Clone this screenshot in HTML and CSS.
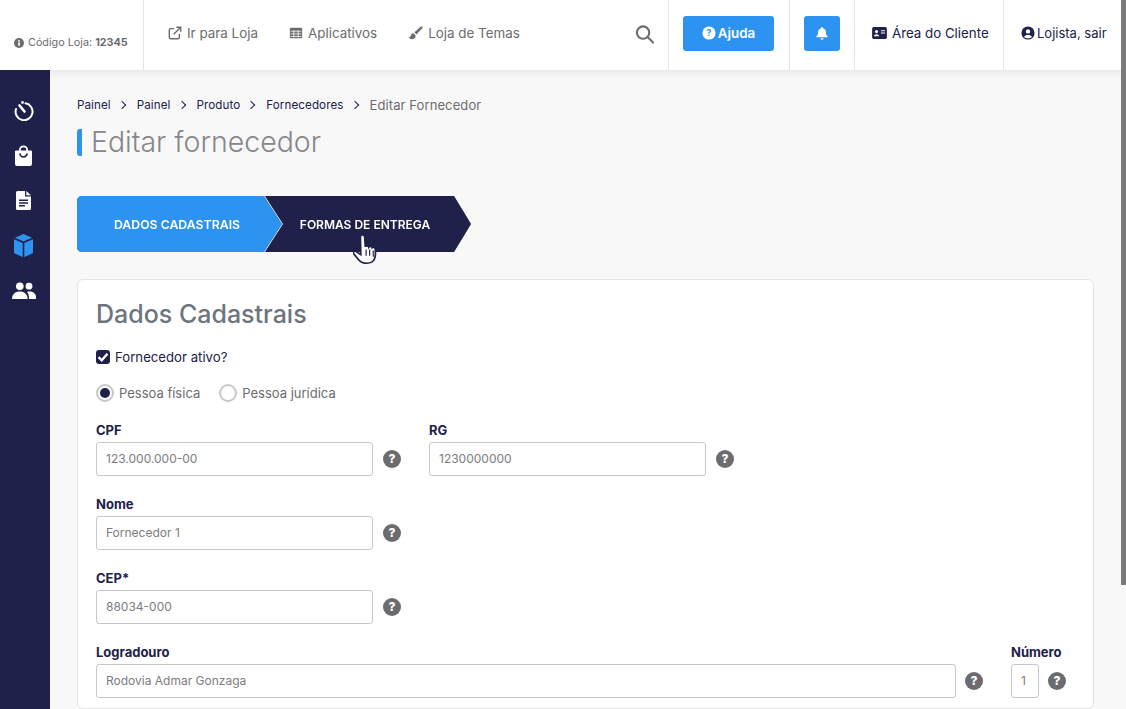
FILE: index.html
```html
<!DOCTYPE html>
<html lang="en">

<head>
    <meta charset="UTF-8">
    <meta name="viewport" content="width=device-width, initial-scale=1.0">
    <title>Editar fornecedor</title>
    <link rel="stylesheet" href="styles.css">
</head>

<body>
    <header class="topbar">
        <div class="store-code">
            <svg class="ico-info" viewBox="0 0 16 16"><circle cx="8" cy="8" r="8" fill="#6c6c70"/><rect x="6.800" y="7" width="2.600" height="5.400" fill="#fff"/><circle cx="8" cy="4.600" r="1.500" fill="#fff"/></svg>
            <span>Código Loja: <b>12345</b></span>
        </div>
        <nav class="topnav">
            <a href="#">
                <svg class="ico" viewBox="0 0 16 16" fill="none" stroke="#6c6c70" stroke-width="1.600"><path d="M7 3H3a1.500 1.500 0 0 0-1.500 1.500V13A1.500 1.500 0 0 0 3 14.500h8.500A1.500 1.500 0 0 0 13 13V9"/><path d="M6.500 9.500 14 2M9.500 1.500h5v5"/></svg>
                Ir para Loja
            </a>
            <a href="#">
                <svg class="ico" viewBox="0 0 16 16"><rect x="1" y="2" width="14" height="12" rx="1.500" fill="#6c6c70"/><path d="M2 6h12M2 9h12M2 12h12M5.500 5v8M10.500 5v8" stroke="#fff" stroke-width=".9"/></svg>
                Aplicativos
            </a>
            <a href="#">
                <svg class="ico ico-brush" viewBox="0 0 16 16" fill="#6c6c70"><path d="M15.500.8c-.6-.6-1.300-.4-2 .1L6.800 6.700 9 9l6-6.300c.6-.7.900-1.400.5-1.900zM5.800 7.700c-1.800.2-2.600 1.300-2.900 2.700-.2 1-.9 1.600-2.400 1.700 1 1.500 3 2.300 5 1.700 1.900-.6 3-2.300 2.500-4z"/></svg>
                Loja de Temas
            </a>
        </nav>
        <div class="search-cell">
            <svg class="ico-search" viewBox="0 0 20 20" fill="none" stroke="#6c6c70" stroke-width="2.200"><circle cx="8.500" cy="8.500" r="6.500"/><path d="m13.500 13.500 5.500 5.500" stroke-linecap="round"/></svg>
        </div>
        <div class="top-cell help-cell">
            <button class="btn-blue btn-help">
                <svg class="ico" viewBox="0 0 16 16"><circle cx="8" cy="8" r="7.500" fill="#fff"/><text x="8" y="11.500" text-anchor="middle" class="help-mark" fill="#2d93f0">?</text></svg>
                Ajuda
            </button>
        </div>
        <div class="top-cell bell-cell">
            <button class="btn-blue btn-bell">
                <svg class="ico" viewBox="0 0 16 16" fill="#fff"><path d="M8 1c-.6 0-1 .4-1 1v.5C4.800 3 3.500 4.700 3.500 7c0 2.500-.7 3.600-2 4.800-.3.400 0 1 .5 1h12c.5 0 .8-.6.5-1-1.300-1.200-2-2.300-2-4.800 0-2.300-1.300-4-3.500-4.500V2c0-.6-.4-1-1-1zM6.200 14a1.800 1.800 0 0 0 3.600 0z"/></svg>
            </button>
        </div>
        <a class="top-cell client-cell" href="#">
            <svg class="ico-card" viewBox="0 0 16 13"><rect width="16" height="13" rx="1.800" fill="#20214a"/><circle cx="4.800" cy="5" r="1.700" fill="#fff"/><path d="M2 10c0-3 5.600-3 5.600 0z" fill="#fff"/><path d="M9.500 4h4.500M9.500 6.500h4.500" stroke="#fff" stroke-width="1.200"/></svg>
            Área do Cliente
        </a>
        <a class="top-cell user-cell" href="#">
            <svg class="ico" viewBox="0 0 16 16"><circle cx="8" cy="8" r="7.500" fill="#20214a"/><circle cx="8" cy="6.200" r="2.500" fill="#fff"/><path d="M3.500 12.500c1-3 8-3 9 0-2 2-7 2-9 0z" fill="#fff"/></svg>
            Lojista, sair
        </a>
    </header>

    <div class="layout">
        <aside class="sidebar">
            <div class="side-item">
                <svg class="ico-timer" viewBox="0 0 20 20" fill="none" stroke="#fff" stroke-width="2"><path d="M11.500 2.300A8.500 8.500 0 1 1 2 8" stroke-linecap="round"/><path d="M5.500 4.500l5 6" stroke-width="2.600" stroke-linecap="round"/><circle cx="8.500" cy="1.500" r="1.400" fill="#fff" stroke="none"/></svg>
            </div>
            <div class="side-item">
                <svg class="ico-bag" viewBox="0 0 17 21"><path d="M1 5.500h15a1 1 0 0 1 1 1v12.500a2 2 0 0 1-2 2H2a2 2 0 0 1-2-2V6.500a1 1 0 0 1 1-1z" fill="#fff"/><path d="M4.800 6V5a3.700 3.700 0 0 1 7.400 0v1" fill="none" stroke="#fff" stroke-width="1.800"/><path d="M5 8.500a3.500 3.500 0 0 0 7 0" fill="none" stroke="#20214a" stroke-width="1.700"/></svg>
            </div>
            <div class="side-item">
                <svg class="ico-doc" viewBox="0 0 15 19"><path d="M1.500 0H9v5.500h6v12A1.500 1.500 0 0 1 13.500 19h-12A1.500 1.500 0 0 1 0 17.500v-16A1.500 1.500 0 0 1 1.500 0zM10.300 0 15 4.300h-4.700z" fill="#fff"/><path d="M3 9.300h9M3 12h9M3 14.700h6" stroke="#20214a" stroke-width="1.400"/></svg>
            </div>
            <div class="side-item">
                <svg class="ico-cube" viewBox="0 0 19 23"><path d="M9.500 0 18 3.800 9.500 7.500 1 3.800z" fill="#2d93f0"/><path d="M0 5.300l8.700 3.800V23L.8 19.500a1.300 1.300 0 0 1-.8-1.200zM19 5.300l-8.700 3.800V23l7.900-3.500a1.300 1.300 0 0 0 .8-1.200z" fill="#2d93f0"/></svg>
            </div>
            <div class="side-item">
                <svg class="ico-users" viewBox="0 0 24 17" fill="#fff"><circle cx="7.800" cy="4.200" r="3.800"/><circle cx="17" cy="4.200" r="3.400"/><path d="M0 17c0-5 3.500-7.500 7.800-7.500s7.800 2.500 7.800 7.500z"/><path d="M17 17h7v-2c0-3.500-3-5.500-6.500-5.500-1 0-1.800.1-2.500.4 1.500 1.700 2 3.500 2 7.100z"/></svg>
            </div>
        </aside>

        <main class="content">
            <ol class="breadcrumb">
                <li>Painel</li>
                <li>Painel</li>
                <li>Produto</li>
                <li>Fornecedores</li>
                <li class="current">Editar Fornecedor</li>
            </ol>
            <h1 class="page-title">Editar fornecedor</h1>

            <div class="steps">
                <div class="step-track">
                    <a class="step step-first" href="#">DADOS CADASTRAIS</a>
                    <a class="step step-second" href="#">FORMAS DE ENTREGA</a>
                </div>
                <svg class="cursor" viewBox="1 1 21 31" preserveAspectRatio="none"><path d="M9 2c1.200 0 1.700 1 1.800 2l.6 9.500c.3-1.300 2.600-1.300 2.900.3.500-1 2.500-1 2.800.6.700-.8 2.500-.5 2.600 1 .3 4 .4 6.300-.4 9-.9 3-3.400 5-6.800 5-3 0-5-1.300-6.800-3.500L1.500 20c-1-1.500.8-3 2.200-2l3.800 3L7.200 4c0-1.100.7-2 1.800-2z" fill="#fff" stroke="#20214a" stroke-width="1.500"/><path d="M12 16v6M15 16v6M18 17v6" stroke="#20214a" stroke-width="1"/></svg>
            </div>

            <section class="card">
                <h2>Dados Cadastrais</h2>

                <label class="check-row">
                    <span class="fake-check"><svg viewBox="0 0 14 14" fill="none" stroke="#fff" stroke-width="2.400"><path d="M2.500 7.200 5.700 10.300 11.500 3.800"/></svg></span>
                    Fornecedor ativo?
                </label>

                <div class="radio-row">
                    <label class="radio radio-on"><span class="dot"></span>Pessoa física</label>
                    <label class="radio"><span class="dot"></span>Pessoa jurídica</label>
                </div>

                <div class="form-row">
                    <div class="field">
                        <label>CPF</label>
                        <div class="input-line"><div class="input w277">123.000.000-00</div><span class="tip">?</span></div>
                    </div>
                    <div class="field">
                        <label>RG</label>
                        <div class="input-line"><div class="input w277">1230000000</div><span class="tip">?</span></div>
                    </div>
                </div>

                <div class="form-row">
                    <div class="field">
                        <label>Nome</label>
                        <div class="input-line"><div class="input w277">Fornecedor 1</div><span class="tip">?</span></div>
                    </div>
                </div>

                <div class="form-row">
                    <div class="field">
                        <label>CEP*</label>
                        <div class="input-line"><div class="input w277">88034-000</div><span class="tip">?</span></div>
                    </div>
                </div>

                <div class="form-row form-row-wide">
                    <div class="field">
                        <label>Logradouro</label>
                        <div class="input-line"><div class="input w860">Rodovia Admar Gonzaga</div><span class="tip">?</span></div>
                    </div>
                    <div class="field">
                        <label>Número</label>
                        <div class="input-line"><div class="input w28">1</div><span class="tip">?</span></div>
                    </div>
                </div>
            </section>
        </main>
    </div>
    <div class="scrollbar"></div>
</body>

</html>
```

FILE: styles.css
```css
body {
    margin: 0;
    height: 709px;
    overflow: hidden;
    background: #f8f8f8;
    color: #20214a;
    font-family: Inter, "Open Sans", Arial, sans-serif;
    font-size: 13px;
}

a {
    color: inherit;
    text-decoration: none;
}

/* top bar */
.topbar {
    display: flex;
    height: 70px;
    background: #fff;
    box-shadow: 0 2px 10px rgba(0, 0, 0, 0.08);
    position: relative;
    z-index: 2;
}

.store-code {
    width: 144px;
    box-sizing: border-box;
    border-right: 1px solid #e4e4e4;
    padding: 35px 0 0 14px;
    display: flex;
    align-items: flex-start;
    gap: 4px;
    font-size: 10.800px;
    color: #6c6c70;
}

.store-code span {
    line-height: 15px;
}

.ico-info {
    width: 10px;
    height: 10px;
    margin-top: 3px;
}

.topnav {
    flex: 1;
    display: flex;
    align-items: center;
    gap: 31px;
    padding-left: 24px;
    color: #6c6c70;
    font-size: 13.400px;
    height: 66px;
}

.topnav a {
    display: flex;
    align-items: center;
    gap: 5px;
}

.ico {
    width: 14px;
    height: 14px;
    flex: none;
}

.ico-brush {
    width: 15px;
    height: 15px;
}

.search-cell {
    display: flex;
    align-items: center;
    height: 67px;
    padding-right: 14px;
}

.ico-search {
    width: 19px;
    height: 20px;
}

.top-cell {
    border-left: 1px solid #e4e4e4;
    display: flex;
    align-items: center;
    box-sizing: border-box;
    height: 70px;
    padding-bottom: 4px;
}

.help-cell {
    width: 121px;
    padding-left: 14px;
}

.bell-cell {
    width: 65px;
    padding-left: 14px;
}

.client-cell {
    width: 149px;
    padding-left: 17px;
    gap: 5px;
    font-size: 13.300px;
}

.user-cell {
    width: 123px;
    padding-left: 17px;
    gap: 2px;
    font-size: 13px;
}

.ico-card {
    width: 15px;
    height: 12px;
}

.btn-blue {
    background: #2d93f0;
    color: #fff;
    border: none;
    border-radius: 3px;
    height: 35px;
    display: flex;
    align-items: center;
    justify-content: center;
    font-family: inherit;
    font-weight: 600;
    font-size: 13.400px;
    padding: 0;
}

.btn-help {
    width: 91px;
    gap: 2px;
}

.btn-bell {
    width: 36px;
}

.help-mark {
    font-size: 10px;
    font-weight: 700;
}

/* layout */
.layout {
    display: flex;
    height: 639px;
}

.sidebar {
    width: 50px;
    flex: none;
    background: #20214a;
    display: flex;
    flex-direction: column;
    padding: 18px 3px 0 0;
    box-sizing: border-box;
}

.side-item {
    height: 45px;
    display: flex;
    align-items: center;
    justify-content: center;
}

.ico-timer {
    width: 20px;
    height: 20px;
}

.ico-bag {
    width: 17px;
    height: 21px;
}

.ico-doc {
    width: 15px;
    height: 19px;
}

.ico-cube {
    width: 19px;
    height: 23px;
}

.ico-users {
    width: 24px;
    height: 17px;
}

.content {
    width: 1043px;
    padding-left: 27px;
}

/* breadcrumb */
.breadcrumb {
    list-style: none;
    margin: 0;
    padding: 28px 0 0;
    display: flex;
    font-size: 11.600px;
    letter-spacing: 0.100px;
    line-height: 15px;
    height: 15px;
}

.breadcrumb li:not(:last-child)::after {
    content: "";
    display: inline-block;
    width: 5px;
    height: 5px;
    border-top: 1px solid #20214a;
    border-right: 1px solid #20214a;
    transform: rotate(45deg);
    margin: 0 12px 1px 8px;
}

.breadcrumb .current {
    color: #6c6c70;
    font-size: 13px;
}

.page-title {
    margin: 16px 0 0;
    border-left: 5px solid #2d93f0;
    border-radius: 3px;
    padding-left: 9px;
    height: 27px;
    line-height: 25px;
    font-size: 28.500px;
    font-weight: 300;
    color: #87878b;
    white-space: nowrap;
}

/* steps */
.steps {
    position: relative;
    margin-top: 40px;
    width: 394px;
    height: 56px;
}

.step-track {
    display: flex;
    filter: drop-shadow(0 0 0.500px rgba(0, 0, 0, 0.45));
}

.step {
    height: 56px;
    box-sizing: border-box;
    display: flex;
    align-items: center;
    justify-content: center;
    color: #fff;
    font-weight: 600;
    font-size: 12.300px;
}

.step-first {
    width: 205px;
    background: #2d93f0;
    padding-right: 5px;
    clip-path: polygon(3px 0, 187px 0, 205px 50%, 187px 100%, 3px 100%, 0 53px, 0 3px);
}

.step-second {
    width: 207px;
    margin-left: -18px;
    background: #20214a;
    padding-right: 5px;
    font-size: 12px;
    clip-path: polygon(1px 0, 190px 0, 207px 50%, 190px 100%, 1px 100%, 19px 50%);
}

.cursor {
    position: absolute;
    left: 276px;
    top: 38px;
    width: 25px;
    height: 32px;
}

/* card */
.card {
    margin-top: 27px;
    width: 1017px;
    height: 430px;
    box-sizing: border-box;
    background: #fff;
    border: 1px solid #e4e4e4;
    border-radius: 6px;
    padding: 18px 18px 0;
}

.card h2 {
    margin: 0;
    font-size: 25px;
    line-height: 32px;
    font-weight: 500;
    color: #6c757d;
}

.check-row {
    display: flex;
    align-items: center;
    gap: 5px;
    margin-top: 17px;
    height: 20px;
    font-size: 13.200px;
}

.fake-check {
    width: 14px;
    height: 14px;
    background: #20214a;
    border-radius: 3px;
    display: block;
}

.fake-check svg {
    display: block;
}

.radio-row {
    display: flex;
    gap: 19px;
    margin-top: 16px;
    height: 20px;
    color: #6c6c70;
    font-size: 13px;
}

.radio {
    display: flex;
    align-items: center;
    gap: 5px;
}

.dot {
    width: 14px;
    height: 14px;
    border: 2px solid #c8c8c8;
    border-radius: 50%;
    display: block;
    position: relative;
}

.radio-on .dot::after {
    content: "";
    position: absolute;
    left: 2px;
    top: 2px;
    width: 10px;
    height: 10px;
    background: #20214a;
    border-radius: 50%;
}

.form-row {
    display: flex;
    gap: 28px;
    margin-top: 18px;
}

.form-row + .form-row {
    margin-top: 19px;
}

.field label {
    display: block;
    font-weight: 700;
    font-size: 13px;
    line-height: 18px;
    margin-bottom: 3px;
}

.input-line {
    display: flex;
    align-items: center;
    gap: 10px;
}

.form-row-wide .input-line {
    gap: 9px;
}

.input {
    height: 34px;
    box-sizing: border-box;
    border: 1px solid #c8c8c8;
    border-radius: 3px;
    background: #fff;
    padding: 0 9px;
    line-height: 32px;
    font-size: 12px;
    color: #7c7c80;
}

.w277 {
    width: 277px;
}

.w860 {
    width: 860px;
}

.w28 {
    width: 28px;
}

.tip {
    width: 18px;
    height: 18px;
    border-radius: 50%;
    background: #6c6c70;
    color: #fff;
    font-size: 12px;
    font-weight: 800;
    line-height: 18px;
    text-align: center;
    flex: none;
}

.scrollbar {
    position: absolute;
    right: 0;
    top: 0;
    width: 5px;
    height: 585px;
    background: #7a7a7a;
    z-index: 3;
}
```
